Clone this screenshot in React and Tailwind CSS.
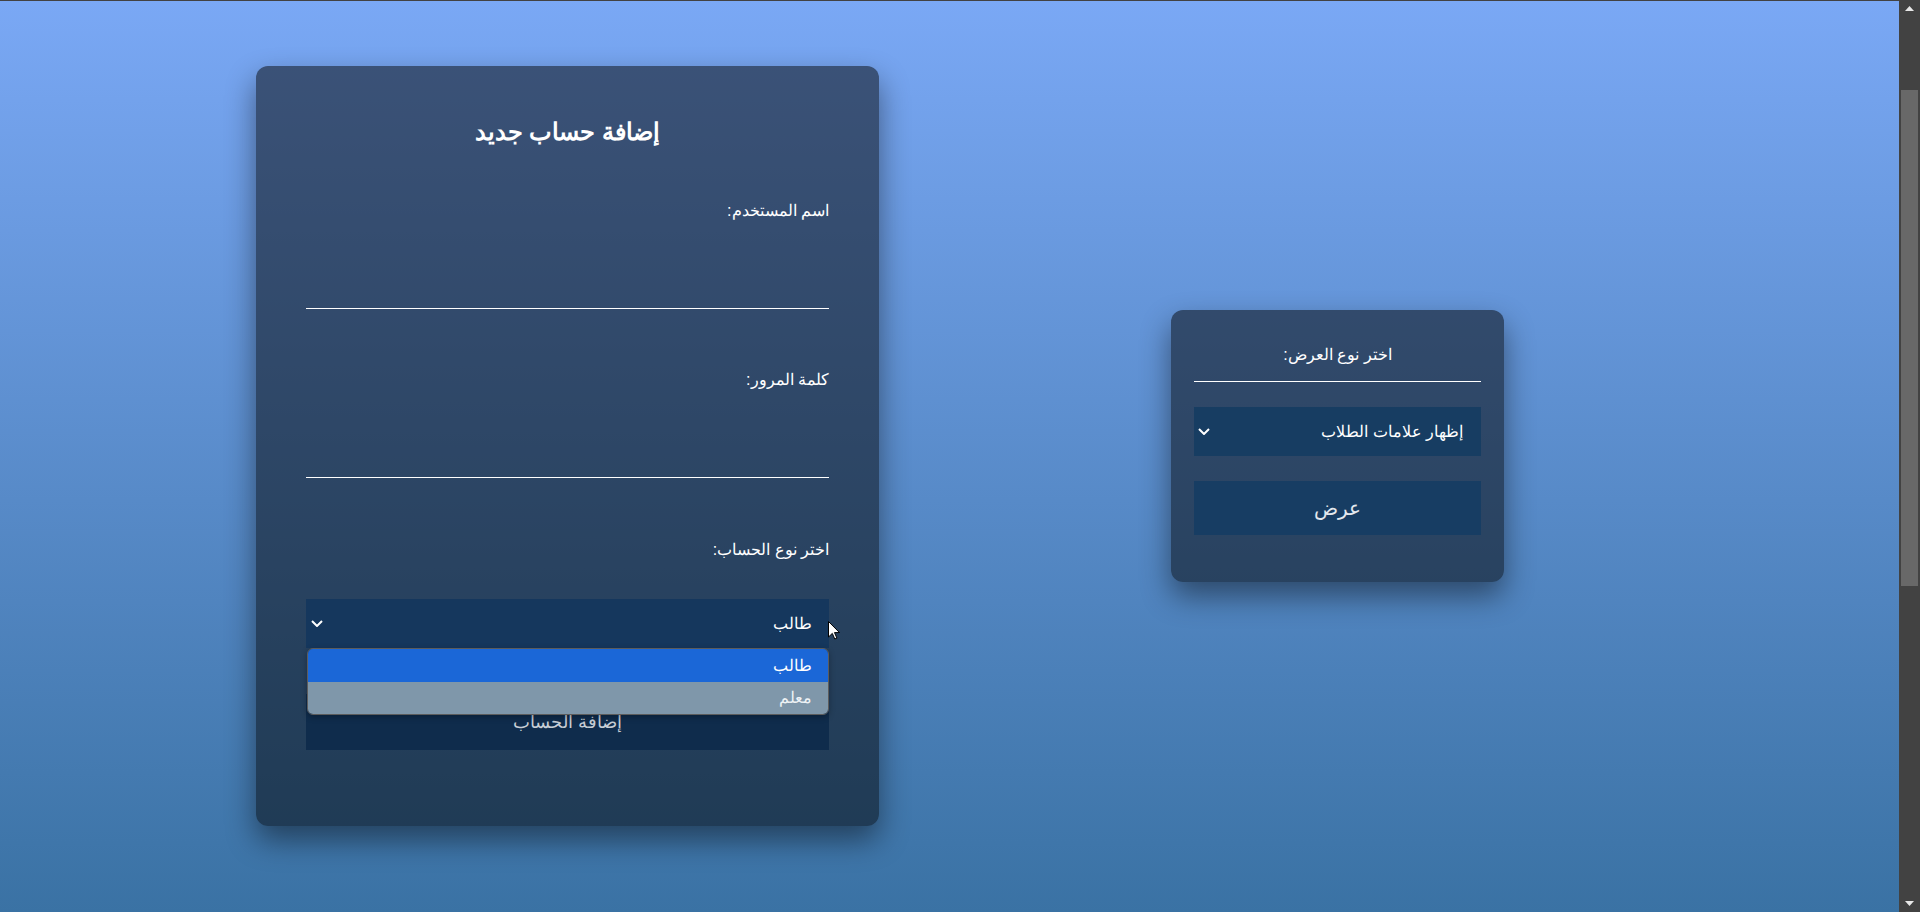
import React from 'react';

// سهم القائمة المنسدلة
const Chevron = () => (
  <svg width="12" height="7" viewBox="0 0 12 7" fill="none">
    <path d="M1 1l5 5 5-5" stroke="white" strokeWidth="2" />
  </svg>
);

// مؤشر الفأرة فوق القائمة
const Cursor = () => (
  <svg width="12" height="19" viewBox="0 0 12 19">
    <path d="M0.5 0.5 L0.5 16 L4.3 12.4 L6.8 18 L8.9 17.1 L6.5 11.6 L11.5 11.6 Z" fill="white" stroke="black" strokeWidth="1" />
  </svg>
);

const App = () => {
  return (
    <div className="flex h-screen w-full overflow-hidden font-['Liberation_Sans',Arial,sans-serif]">
      <main className="flex-1 border-t border-[#424242] bg-linear-to-b from-[#7aa8f5] to-[#3a72a4]">
        <div className="flex items-center gap-[292px] pl-[256px] pt-[65px]">

          {/* إضافة حساب جديد */}
          <div dir="rtl" className="w-[623px] rounded-[12px] bg-black/50 px-[50px] pt-[50px] pb-[76px] text-white shadow-[0_14px_30px_rgba(0,0,0,0.45)]">
            <h2 className="text-center text-[24px] font-bold leading-[32px]">إضافة حساب جديد</h2>

            <label className="mt-[53px] block text-[16px] leading-[20px]">اسم المستخدم:</label>
            <div className="h-[88px] border-b border-white"></div>

            <label className="mt-[61px] block text-[16px] leading-[20px]">كلمة المرور:</label>
            <div className="h-[88px] border-b border-white"></div>

            <label className="mt-[62px] block text-[16px] leading-[20px]">اختر نوع الحساب:</label>

            <div className="relative mt-[39px] flex h-[49px] items-center justify-between bg-[#15375d] pr-[17px] pl-[5px] text-[16px]">
              <span>طالب</span>
              <Chevron />

              <div className="absolute left-[522px] top-[22px] z-20">
                <Cursor />
              </div>

              {/* القائمة المفتوحة */}
              <div className="absolute top-full left-[1px] right-0 z-10 overflow-hidden rounded-[6px] border border-[#5c5c5c] text-[16px] shadow-[0_2px_6px_rgba(0,0,0,0.3)]">
                <div className="flex h-[33px] items-center bg-[#1b67d7] pr-[16px] text-white">طالب</div>
                <div className="flex h-[32px] items-center bg-[#7f97aa] pr-[16px] text-[#eef2f5]">معلم</div>
              </div>
            </div>

            <button className="mt-[46px] flex h-[56px] w-full items-center justify-center bg-[#0f2c4c] text-[18px] text-[#c7ced6]">
              إضافة الحساب
            </button>
          </div>

          {/* اختيار نوع العرض */}
          <div dir="rtl" className="w-[333px] rounded-[12px] bg-black/50 px-[23px] pt-[35px] pb-[47px] text-white shadow-[0_14px_30px_rgba(0,0,0,0.45)]">
            <div className="border-b border-white pb-[16px] text-center text-[16px] leading-[20px]">اختر نوع العرض:</div>

            <div className="mt-[25px] flex h-[49px] items-center justify-between bg-[#173d62] pr-[18px] pl-[4px] text-[16px]">
              <span>إظهار علامات الطلاب</span>
              <Chevron />
            </div>

            <button className="mt-[25px] flex h-[54px] w-full items-center justify-center bg-[#173d63] text-[20px] text-[#e3e8ee]">
              عرض
            </button>
          </div>
        </div>
      </main>

      {/* شريط التمرير */}
      <aside className="flex w-[21px] flex-col bg-[#424242]">
        <div className="flex h-[17px] items-center justify-center">
          <svg width="9" height="5" viewBox="0 0 9 5"><path d="M0 5 L4.5 0 L9 5 Z" fill="#e8e8e8" /></svg>
        </div>
        <div className="flex-1">
          <div className="mx-[2px] mt-[73px] h-[496px] bg-[#686868]"></div>
        </div>
        <div className="flex h-[17px] items-center justify-center">
          <svg width="9" height="5" viewBox="0 0 9 5"><path d="M0 0 L4.5 5 L9 0 Z" fill="#e8e8e8" /></svg>
        </div>
      </aside>
    </div>
  );
};

export default App;
